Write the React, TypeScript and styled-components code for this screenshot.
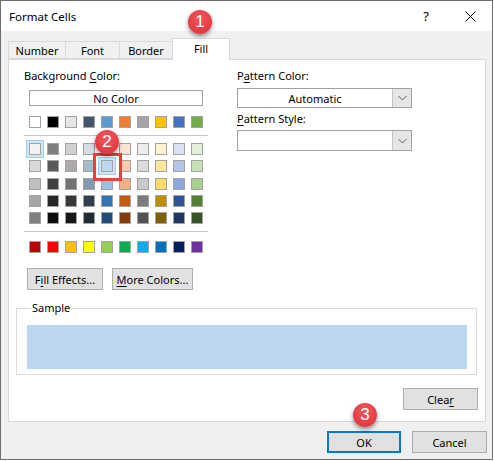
import React from "react";
import styled, { createGlobalStyle } from "styled-components";

const Global = createGlobalStyle`
  html, body { margin: 0; padding: 0; background: #ffffff; }
  body { font-family: "Noto Sans", "Liberation Sans", sans-serif; font-size: 11px; color: #000; }
  * { box-sizing: border-box; }
`;

const Window = styled.div`
  position: relative;
  width: 493px;
  height: 460px;
  border: 1px solid #6e6e6e;
  background: #f0f0f0;
  display: flex;
  flex-direction: column;
`;

const TitleBar = styled.div`
  height: 30px;
  background: #ffffff;
  display: flex;
  align-items: center;
  padding-left: 8px;
  flex-shrink: 0;
`;

const Title = styled.div`
  font-size: 11.5px;
  flex: 1;
  margin-top: 1px;
`;

const TitleButton = styled.div`
  width: 44px;
  height: 30px;
  display: flex;
  align-items: center;
  justify-content: center;
  font-size: 13px;
`;

const Content = styled.div`
  flex: 1;
  display: flex;
  flex-direction: column;
  padding: 7px 6px 0 7px;
`;

const TabRow = styled.div`
  display: flex;
  height: 21px;
  align-items: flex-end;
  position: relative;
  z-index: 1;
`;

const Tab = styled.div<{ $w: number; $active?: boolean }>`
  width: ${(p) => p.$w}px;
  height: ${(p) => (p.$active ? 22 : 18)}px;
  margin-left: -1px;
  margin-bottom: ${(p) => (p.$active ? -1 : 0)}px;
  border: 1px solid #d9d9d9;
  border-bottom: ${(p) => (p.$active ? "none" : "1px solid #d9d9d9")};
  background: ${(p) => (p.$active ? "#ffffff" : "#f0f0f0")};
  display: flex;
  align-items: center;
  justify-content: center;
  padding-bottom: ${(p) => (p.$active ? 3 : 0)}px;
  &:first-child { margin-left: 0; }
`;

const Panel = styled.div`
  width: 478px;
  height: 363px;
  border: 1px solid #d9d9d9;
  background: #ffffff;
  display: flex;
  flex-direction: column;
  padding-top: 8px;
  flex-shrink: 0;
`;

const TopSection = styled.div`
  display: grid;
  grid-template-columns: 213px 175px;
  padding-left: 15px;
`;

const Column = styled.div`
  display: flex;
  flex-direction: column;
`;

const Label = styled.div<{ $mt?: number }>`
  height: 16px;
  line-height: 16px;
  margin-top: ${(p) => p.$mt ?? 0}px;
  white-space: nowrap;
`;

const U = styled.span`
  text-decoration: underline;
  text-underline-offset: 2px;
`;

const NoColorBox = styled.div`
  margin: 6px 0 0 5px;
  width: 174px;
  height: 16px;
  border: 1px solid #a0a0a0;
  display: flex;
  align-items: center;
  justify-content: center;
`;

const SwatchRow = styled.div<{ $mt: number }>`
  display: grid;
  grid-template-columns: repeat(10, 12px);
  column-gap: 6px;
  margin: ${(p) => p.$mt}px 0 0 5px;
`;

const SwatchGrid = styled.div`
  display: grid;
  grid-template-columns: repeat(10, 12px);
  grid-auto-rows: 12px;
  column-gap: 6px;
  row-gap: 5.25px;
  margin: 7px 0 0 5px;
`;

const Swatch = styled.div<{ $c: string; $hl?: boolean }>`
  width: 12px;
  height: 12px;
  background: ${(p) => p.$c};
  border: 1.5px solid #a3a3a3;
  box-shadow: ${(p) => (p.$hl ? "0 0 0 2px #cde6fb, 0 0 0 3px #9ccdf3" : "none")};
`;

const Separator = styled.div<{ $mt: number }>`
  width: 184px;
  height: 1px;
  background: #c8c8c8;
  margin-top: ${(p) => p.$mt}px;
`;

const Select = styled.div<{ $h: number; $mt: number }>`
  width: 175px;
  height: ${(p) => p.$h}px;
  margin-top: ${(p) => p.$mt}px;
  border: 1px solid #a0a0a0;
  display: flex;
  background: #ffffff;
`;

const SelectValue = styled.div`
  flex: 1;
  display: flex;
  align-items: center;
  justify-content: center;
`;

const SelectArrow = styled.div`
  width: 19px;
  background: #e6e6e6;
  border-left: 1px solid #c4c4c4;
  display: flex;
  align-items: center;
  justify-content: center;
`;

const ButtonRow = styled.div`
  display: flex;
  gap: 9px;
  margin: 15px 0 0 18px;
`;

const Button = styled.div<{ $w: number; $default?: boolean }>`
  width: ${(p) => p.$w}px;
  height: 22px;
  background: #e1e1e1;
  border: ${(p) => (p.$default ? "2px solid #0078d7" : "1px solid #adadad")};
  display: flex;
  align-items: center;
  justify-content: center;
`;

const Group = styled.fieldset`
  margin: 11px 0 0 7px;
  width: 461px;
  height: 74px;
  border: 1px solid #dcdcdc;
  padding: 10px 9px 0 10px;
`;

const Legend = styled.legend`
  padding: 0 1px;
  margin-left: 4px;
  line-height: 14px;
`;

const SampleFill = styled.div`
  width: 440px;
  height: 44px;
  background: #bdd7ee;
`;

const ClearRow = styled.div`
  display: flex;
  justify-content: flex-end;
  padding-right: 7px;
  margin-top: 13px;
`;

const Footer = styled.div`
  display: flex;
  justify-content: flex-end;
  gap: 11px;
  margin: 9px -1px 0 0;
`;

const Badge = styled.div<{ $x: number; $y: number }>`
  position: absolute;
  left: ${(p) => p.$x}px;
  top: ${(p) => p.$y}px;
  width: 24px;
  height: 24px;
  border-radius: 50%;
  background: radial-gradient(circle at 50% 35%, #f2575c 0%, #e23b42 70%, #d2303a 100%);
  box-shadow: 0 2px 4px rgba(0, 0, 0, 0.45);
  color: #ffffff;
  font-family: "Liberation Sans", Arial, sans-serif;
  font-size: 17px;
  display: flex;
  align-items: center;
  justify-content: center;
  z-index: 5;
`;

const RedBox = styled.div`
  position: absolute;
  left: 92px;
  top: 152px;
  width: 29px;
  height: 28px;
  border: 3px solid #e8403f;
  z-index: 4;
`;

const theme = ["#FFFFFF", "#000000", "#E7E6E6", "#44546A", "#5B9BD5", "#ED7D31", "#A5A5A5", "#FFC000", "#4472C4", "#70AD47"];
const tints = [
  ["#F2F2F2", "#7F7F7F", "#D0CECE", "#D6DCE4", "#DDEBF7", "#FCE4D6", "#EDEDED", "#FFF2CC", "#D9E1F2", "#E2EFDA"],
  ["#D9D9D9", "#595959", "#AEAAAA", "#ACB9CA", "#BDD7EE", "#F8CBAD", "#DBDBDB", "#FFE699", "#B4C6E7", "#C6E0B4"],
  ["#BFBFBF", "#404040", "#757171", "#8497B0", "#9BC2E6", "#F4B084", "#C9C9C9", "#FFD966", "#8EA9DB", "#A9D08E"],
  ["#A6A6A6", "#262626", "#3A3838", "#333F4F", "#2F75B5", "#C65911", "#7B7B7B", "#BF8F00", "#305496", "#548235"],
  ["#808080", "#0D0D0D", "#161616", "#222B35", "#1F4E78", "#833C0C", "#525252", "#806000", "#203764", "#375623"],
];
const standard = ["#C00000", "#FF0000", "#FFC000", "#FFFF00", "#92D050", "#00B050", "#00B0F0", "#0070C0", "#002060", "#7030A0"];

const Chevron = () => (
  <svg width="9" height="6" viewBox="0 0 9 6">
    <path d="M0.5 1 L4.5 5 L8.5 1" fill="none" stroke="#606060" strokeWidth="1" />
  </svg>
);

const CloseIcon = () => (
  <svg width="11" height="11" viewBox="0 0 11 11">
    <path d="M0.5 0.5 L10.5 10.5 M10.5 0.5 L0.5 10.5" stroke="#000" strokeWidth="1" />
  </svg>
);

export default function App() {
  return (
    <>
      <Global />
      <Window>
        <TitleBar>
          <Title>Format Cells</Title>
          <TitleButton>?</TitleButton>
          <TitleButton>
            <CloseIcon />
          </TitleButton>
        </TitleBar>
        <Content>
          <TabRow>
            <Tab $w={58}>Number</Tab>
            <Tab $w={55}>Font</Tab>
            <Tab $w={54}>Border</Tab>
            <Tab $w={58} $active>
              Fill
            </Tab>
          </TabRow>
          <Panel>
            <TopSection>
              <Column>
                <Label>
                  Background <U>C</U>olor:
                </Label>
                <NoColorBox>No Color</NoColorBox>
                <SwatchRow $mt={10}>
                  {theme.map((c) => (
                    <Swatch key={c} $c={c} />
                  ))}
                </SwatchRow>
                <Separator $mt={7} />
                <SwatchGrid>
                  {tints.map((row, r) =>
                    row.map((c, i) => (
                      <Swatch key={`${r}-${i}`} $c={c} $hl={(r === 0 && i === 0) || (r === 1 && i === 4)} />
                    ))
                  )}
                </SwatchGrid>
                <Separator $mt={7} />
                <SwatchRow $mt={9}>
                  {standard.map((c) => (
                    <Swatch key={c} $c={c} />
                  ))}
                </SwatchRow>
              </Column>
              <Column>
                <Label>
                  P<U>a</U>ttern Color:
                </Label>
                <Select $h={20} $mt={4}>
                  <SelectValue>Automatic</SelectValue>
                  <SelectArrow>
                    <Chevron />
                  </SelectArrow>
                </Select>
                <Label $mt={3}>
                  <U>P</U>attern Style:
                </Label>
                <Select $h={21} $mt={3}>
                  <SelectValue />
                  <SelectArrow>
                    <Chevron />
                  </SelectArrow>
                </Select>
              </Column>
            </TopSection>
            <ButtonRow>
              <Button $w={76}>
                F<U>i</U>ll Effects...
              </Button>
              <Button $w={81}>
                <U>M</U>ore Colors...
              </Button>
            </ButtonRow>
            <Group>
              <Legend>Sample</Legend>
              <SampleFill />
            </Group>
            <ClearRow>
              <Button $w={75}>
                Clea<U>r</U>
              </Button>
            </ClearRow>
          </Panel>
          <Footer>
            <Button $w={74} $default>
              OK
            </Button>
            <Button $w={75}>Cancel</Button>
          </Footer>
        </Content>
        <RedBox />
        <Badge $x={187} $y={9}>1</Badge>
        <Badge $x={94} $y={129}>2</Badge>
        <Badge $x={352} $y={402}>3</Badge>
      </Window>
    </>
  );
}
